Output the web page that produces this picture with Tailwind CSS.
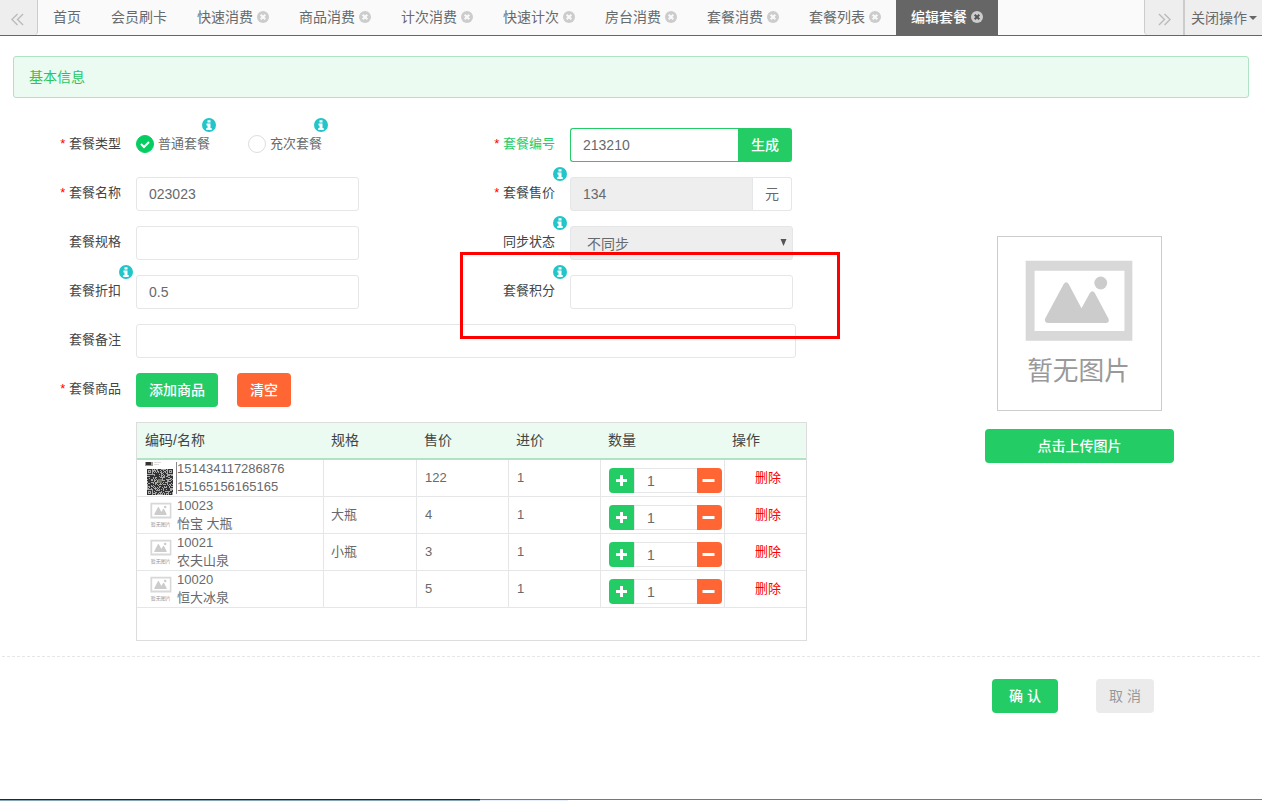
<!DOCTYPE html>
<html lang="zh-CN">
<head>
<meta charset="utf-8">
<title>编辑套餐</title>
<script src="https://cdn.jsdelivr.net/npm/@tailwindcss/browser@4"></script>
</head>
<body class="flex min-h-screen flex-col bg-white font-['Liberation_Sans','Noto_Sans_CJK_SC',sans-serif] text-sm text-[#676a6c]">

<svg class="hidden" aria-hidden="true">
  <symbol id="i-info" viewBox="0 0 14 14">
    <circle cx="7" cy="7" r="7" fill="#23c6c8"/>
    <path d="M5.500 2.200h3v2.300h-3zM4.500 5.500h4v4.500h1.200v1.900H4.300v-1.900h1.200V7.400h-1z" fill="#fff"/>
  </symbol>
  <symbol id="i-close" viewBox="0 0 12 12">
    <circle cx="6" cy="6" r="6" fill="#ccc"/>
    <path d="M3.700 3.700l4.600 4.600M8.300 3.700l-4.600 4.600" stroke="currentColor" stroke-width="2"/>
  </symbol>
  <symbol id="i-noimage" viewBox="0 0 165 175">
    <path fill="#d8d8d8" fill-rule="evenodd" d="M28 24h108v81H28zM37 34v61h91V34z"/>
    <path fill="#ccc" d="M66.500 47.500q2.500-3.500 5 0L84.500 72l8.500-15.500q2.500-3.500 5 0L112 83q1 4-3 4H51q-4 0-3.500-4z"/>
    <circle cx="104" cy="46.500" r="6.500" fill="#ccc"/>
    <text x="81.500" y="145" text-anchor="middle" font-size="26" fill="#999">暂无图片</text>
  </symbol>
</svg>

<header class="flex h-9 shrink-0 border-b border-[#666] bg-[#fafafa]">
  <button type="button" aria-label="向左滚动" class="flex w-[38px] items-center justify-center rounded-br-sm border-r border-[#ccc] bg-[#eee] pt-1 pr-0.5 text-[#bbb]">
    <svg class="size-[13px]" viewBox="0 0 14 14" fill="none" stroke="currentColor"><path d="M7 1L1 7l6 6M13 1L7 7l6 6" stroke-width="1.500"/></svg>
  </button>
  <nav class="flex flex-1 items-stretch overflow-hidden leading-[34px] whitespace-nowrap">
    <a href="#" class="flex px-[15px]">首页</a>
    <a href="#" class="flex px-[15px]">会员刷卡</a>
    <a href="#" class="flex items-center gap-1 px-[15px] pb-0.5">快速消费<svg class="size-3 text-[#fafafa]"><use href="#i-close"/></svg></a>
    <a href="#" class="flex items-center gap-1 px-[15px] pb-0.5">商品消费<svg class="size-3 text-[#fafafa]"><use href="#i-close"/></svg></a>
    <a href="#" class="flex items-center gap-1 px-[15px] pb-0.5">计次消费<svg class="size-3 text-[#fafafa]"><use href="#i-close"/></svg></a>
    <a href="#" class="flex items-center gap-1 px-[15px] pb-0.5">快速计次<svg class="size-3 text-[#fafafa]"><use href="#i-close"/></svg></a>
    <a href="#" class="flex items-center gap-1 px-[15px] pb-0.5">房台消费<svg class="size-3 text-[#fafafa]"><use href="#i-close"/></svg></a>
    <a href="#" class="flex items-center gap-1 px-[15px] pb-0.5">套餐消费<svg class="size-3 text-[#fafafa]"><use href="#i-close"/></svg></a>
    <a href="#" class="flex items-center gap-1 px-[15px] pb-0.5">套餐列表<svg class="size-3 text-[#fafafa]"><use href="#i-close"/></svg></a>
    <a href="#" aria-current="page" class="flex items-center gap-1 bg-[#666] px-[15px] pb-0.5 font-medium text-white">编辑套餐<svg class="size-3 text-[#555]"><use href="#i-close"/></svg></a>
  </nav>
  <button type="button" aria-label="向右滚动" class="flex w-[39px] items-center justify-center rounded-bl-sm border-l border-[#ccc] bg-[#eee] pt-1 text-[#bbb]">
    <svg class="size-[13px]" viewBox="0 0 14 14" fill="none" stroke="currentColor"><path d="M1 1l6 6-6 6M7 1l6 6-6 6" stroke-width="1.500"/></svg>
  </button>
  <button type="button" class="flex items-center gap-0.5 border-l-2 border-[#ccc] bg-[#eee] pr-[5px] pl-1.5 whitespace-nowrap">关闭操作<svg class="h-1 w-2" viewBox="0 0 8 4"><path d="M0 0h8L4 4z" fill="#666"/></svg></button>
</header>

<main class="flex-1">
  <h1 class="mx-[13px] mt-5 flex h-[42px] items-center rounded-[3px] border border-[#b0e2c4] bg-[#ebfbf1] px-[15px] text-sm text-[#24c765]">基本信息</h1>

  <form class="mx-[13px] mt-[30px] flex" onsubmit="return false">
    <div class="grid min-w-0 flex-1 grid-cols-2 gap-y-[15px] pr-[29px]">

      <div class="flex h-[34px]" role="radiogroup" aria-label="套餐类型">
        <span class="w-[123px] shrink-0 pr-[15px] text-right text-[13px] leading-[31px] text-[#444]"><span class="text-[#f00]">*</span> 套餐类型</span>
        <label class="relative flex w-28 items-center gap-1 pb-0.5 text-[13px]">
          <input type="radio" name="type" checked class="size-[18px] appearance-none rounded-full border border-[#ddd] checked:border-[#05cd62] checked:bg-[#05cd62]">
          <svg class="absolute left-1 top-[11px] size-2.5" viewBox="0 0 10 10" fill="none" stroke="#fff" stroke-width="2"><path d="M1 5l3 3 5-5"/></svg>
          普通套餐
          <svg class="absolute -top-2.5 left-[66px] size-3.5"><use href="#i-info"/></svg>
        </label>
        <label class="relative flex w-28 items-center gap-1 pb-0.5 text-[13px]">
          <input type="radio" name="type" class="size-[18px] appearance-none rounded-full border border-[#ddd]">
          充次套餐
          <svg class="absolute -top-2.5 left-[66px] size-3.5"><use href="#i-info"/></svg>
        </label>
      </div>

      <div class="flex h-[34px]">
        <label for="code" class="w-[123px] shrink-0 pr-[15px] text-right text-[13px] leading-[31px] text-[#24cc66]"><span class="text-[#f00]">*</span> 套餐编号</label>
        <input id="code" value="213210" class="w-[168px] rounded-l-[3px] border border-r-0 border-[#24cc66] px-3 text-sm outline-none">
        <button type="button" class="w-[54px] rounded-r-[3px] bg-[#24cc66] text-sm font-medium text-white">生成</button>
      </div>

      <div class="flex h-[34px]">
        <label for="name" class="w-[123px] shrink-0 pr-[15px] text-right text-[13px] leading-[31px] text-[#444]"><span class="text-[#f00]">*</span> 套餐名称</label>
        <input id="name" value="023023" class="w-[223px] rounded-[3px] border border-[#e5e6e7] px-3 text-sm">
      </div>

      <div class="relative flex h-[34px]">
        <label for="price" class="w-[123px] shrink-0 pr-[15px] text-right text-[13px] leading-[31px] text-[#444]"><span class="text-[#f00]">*</span> 套餐售价</label>
        <input id="price" value="134" readonly class="w-[183px] rounded-l-[3px] border border-[#e5e6e7] bg-[#eee] px-3 text-sm">
        <span class="flex w-[39px] items-center justify-center rounded-r-[3px] border border-l-0 border-[#e5e6e7]">元</span>
        <svg class="absolute -top-2.5 left-[106px] size-3.5"><use href="#i-info"/></svg>
      </div>

      <div class="flex h-[34px]">
        <label for="spec" class="w-[123px] shrink-0 pr-[15px] text-right text-[13px] leading-[31px] text-[#444]">套餐规格</label>
        <input id="spec" class="w-[223px] rounded-[3px] border border-[#e5e6e7] px-3 text-sm">
      </div>

      <div class="relative flex h-[34px]">
        <label for="sync" class="w-[123px] shrink-0 pr-[15px] text-right text-[13px] leading-[31px] text-[#444]">同步状态</label>
        <select id="sync" class="w-[223px] appearance-none rounded-[3px] border border-[#e5e6e7] bg-[#eee] px-4 pt-0.5 text-sm"><option>不同步</option></select>
        <svg class="pointer-events-none absolute left-[333px] top-[13px] size-[7px]" viewBox="0 0 7 7"><path d="M0.500 0h6L3.500 7z" fill="#555"/></svg>
        <svg class="absolute -top-2.5 left-[106px] size-3.5"><use href="#i-info"/></svg>
      </div>

      <div class="relative flex h-[34px]">
        <label for="discount" class="w-[123px] shrink-0 pr-[15px] text-right text-[13px] leading-[31px] text-[#444]">套餐折扣</label>
        <input id="discount" value="0.5" class="w-[223px] rounded-[3px] border border-[#e5e6e7] px-3 text-sm">
        <svg class="absolute -top-2.5 left-[106px] size-3.5"><use href="#i-info"/></svg>
      </div>

      <div class="relative flex h-[34px]">
        <label for="points" class="w-[123px] shrink-0 pr-[15px] text-right text-[13px] leading-[31px] text-[#444]">套餐积分</label>
        <input id="points" class="w-[223px] rounded-[3px] border border-[#e5e6e7] px-3 text-sm">
        <svg class="absolute -top-2.5 left-[106px] size-3.5"><use href="#i-info"/></svg>
        <div class="pointer-events-none absolute -top-[23px] left-[13px] z-10 h-[87px] w-[380px] border-3 border-[#f00]"></div>
      </div>

      <div class="col-span-2 flex h-[34px]">
        <label for="remark" class="w-[123px] shrink-0 pr-[15px] text-right text-[13px] leading-[31px] text-[#444]">套餐备注</label>
        <input id="remark" class="w-full max-w-[660px] rounded-[3px] border border-[#e5e6e7] px-3 text-sm">
      </div>

      <div class="col-span-2 flex">
        <span class="w-[123px] shrink-0 pr-[15px] text-right text-[13px] leading-[31px] text-[#444]"><span class="text-[#f00]">*</span> 套餐商品</span>
        <div class="w-full max-w-[671px]">
          <div class="flex gap-[19px]">
            <button type="button" class="h-[34px] w-[82px] rounded bg-[#24cc66] font-medium text-white">添加商品</button>
            <button type="button" class="h-[34px] w-[54px] rounded bg-[#ff6633] font-medium text-white">清空</button>
          </div>
          <div class="mt-[15px] border border-[#ddd] pb-8">
            <table class="w-full table-fixed border-separate border-spacing-0 text-[13px]">
              <colgroup><col class="w-[187px]"><col class="w-[93px]"><col class="w-[92px]"><col class="w-[92px]"><col class="w-[124px]"><col></colgroup>
              <thead>
                <tr class="h-[37px] bg-[#ebfbf1] text-left text-sm text-[#444] *:border-b-2 *:border-[#b0e2c4] *:pt-0 *:pb-0.5 *:pl-[7px] *:font-normal *:first:pl-2">
                  <th>编码/名称</th><th>规格</th><th>售价</th><th>进价</th><th>数量</th><th>操作</th>
                </tr>
              </thead>
              <tbody id="rows"></tbody>
            </table>
          </div>
        </div>
      </div>
    </div>

    <aside class="flex w-[339px] shrink-0 flex-col items-center pt-[108px]">
      <svg class="h-[175px] w-[165px] border border-[#ccc]" viewBox="0 0 165 175" role="img" aria-label="暂无图片"><use href="#i-noimage"/></svg>
      <button type="button" class="mt-[18px] h-[34px] w-[189px] rounded bg-[#24cc66] font-medium text-white">点击上传图片</button>
    </aside>
  </form>

  <div class="mx-0.5 mt-[15px] border-t border-dashed border-[#e5e6e7]"></div>
  <div class="mt-[22px] mr-[108px] flex justify-end gap-[38px]">
    <button type="button" class="h-[34px] w-[66px] rounded bg-[#24cc66] font-medium text-white">确 认</button>
    <button type="button" class="h-[34px] w-[58px] rounded bg-[#ebebeb] text-[#999]">取 消</button>
  </div>
</main>

<footer class="shrink-0">
  <div class="flex h-px"><div class="w-[38%] bg-[#1a2c3a]"></div><div class="flex-1 bg-[#777]"></div></div>
  <div class="flex h-px"><div class="w-[38%] bg-[#86a5b4]"></div><div class="w-[7%] bg-[#e6effb]"></div></div>
</footer>

<template id="row">
  <tr class="h-[37px] *:border-b *:border-[#e5e6e7] *:not-last:border-r">
    <td class="py-0 pl-2"><div class="flex h-9 items-center leading-[18px]"><span class="thumb h-9 w-8 shrink-0"></span><span class="names whitespace-pre-line"></span></div></td>
    <td class="spec pl-[7px]"></td>
    <td class="sale pl-2"></td>
    <td class="pl-2">1</td>
    <td class="pt-2 pl-2 align-top"><div class="flex h-[25px] w-[113px]">
      <button type="button" aria-label="增加" class="flex w-[25px] items-center justify-center rounded-l bg-[#24cc66]"><svg class="size-[13px]" viewBox="0 0 13 13"><path d="M5 1h3v4h4v3H8v4H5V8H1V5h4z" fill="#fff"/></svg></button>
      <input value="1" aria-label="数量" class="w-[63px] border border-r-0 border-[#e5e6e7] pl-3 text-sm">
      <button type="button" aria-label="减少" class="flex w-[25px] items-center justify-center rounded-r bg-[#ff6633] pr-0.5"><svg class="size-[13px]" viewBox="0 0 13 13"><path d="M0.500 5h12v3h-12z" fill="#fff"/></svg></button>
    </div></td>
    <td class="pl-[30px]"><button type="button" class="text-[13px] text-[#f00]">删除</button></td>
  </tr>
</template>

<script>
  const items = [
    ["151434117286876\n15165156165165", "", "122"],
    ["10023\n怡宝 大瓶", "大瓶", "4"],
    ["10021\n农夫山泉", "小瓶", "3"],
    ["10020\n恒大冰泉", "", "5"]
  ];
  // QR code artwork: three finder squares plus pseudo-random modules.
  function qr() {
    let d = "", seed = 7;
    for (let y = 0; y < 26; y++) for (let x = 0; x < 26; x++) {
      seed = (seed * 1103515245 + 12345) % 2147483648;
      const fx = x > 12 ? 25 - x : x, fy = y > 12 ? 25 - y : y;
      let on = (seed >> 16) % 100 < 58;
      if (fx < 6 && fy < 6 && !(x > 12 && y > 12)) {
        const r = Math.max(Math.abs(fx - 2), Math.abs(fy - 2));
        on = r !== 1 && r !== 3;
      }
      if (on) d += `M${x + 2} ${y + 9}h1v1h-1z`;
    }
    return `<svg class="h-9 w-8" viewBox="0 0 32 36"><path fill="#a89a8c" d="M0 2h8v4H0z"/><path fill="#333" d="M1 2h5v3H1z"/><path fill="#ddd" d="M9 2h7v1H9zM9 4h5v1H9z"/><path fill="#aaa" d="M2 9h26v26H2z"/><path fill="#333" d="${d}"/><path fill="#776" d="M13 19h4v4h-4z"/><path fill="#888" d="M31 2h1v32h-1z"/></svg>`;
  }
  const tpl = document.getElementById("row");
  items.forEach(([names, spec, sale], i) => {
    const r = tpl.content.cloneNode(true);
    r.querySelector(".thumb").innerHTML = i ? '<svg class="h-9 w-8" viewBox="0 0 165 175"><use href="#i-noimage"/></svg>' : qr();
    r.querySelector(".names").textContent = names;
    r.querySelector(".spec").textContent = spec;
    r.querySelector(".sale").textContent = sale;
    document.getElementById("rows").append(r);
  });
</script>
</body>
</html>
